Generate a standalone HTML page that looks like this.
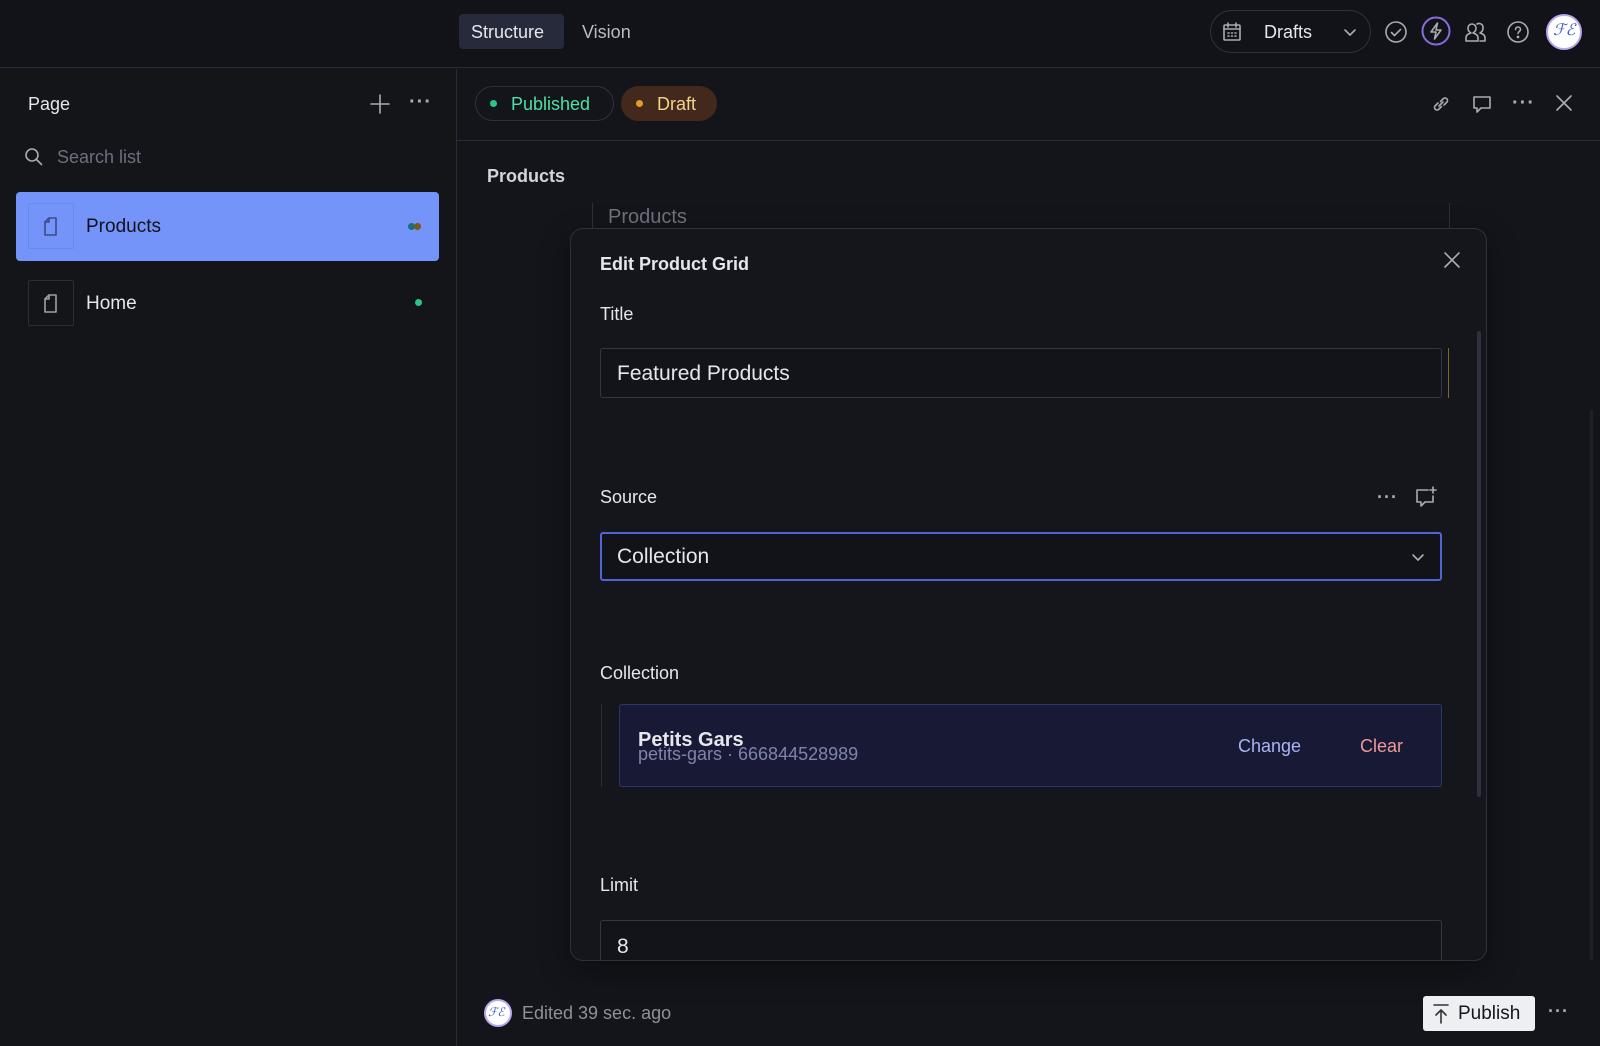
<!DOCTYPE html>
<html><head><meta charset="utf-8"><style>
*{box-sizing:border-box;margin:0;padding:0}
body{width:1600px;height:1046px;background:#14151b;font-family:"Liberation Sans",sans-serif;color:#e4e5ea;position:relative;overflow:hidden}
.a{position:absolute}
.t{position:absolute;white-space:nowrap;line-height:1}
.d{font-size:20px;font-weight:bold;color:#a9abb6;letter-spacing:1px}
svg{position:absolute;fill:none;stroke:#a9abb6;stroke-width:1.6;stroke-linecap:round;stroke-linejoin:round}
</style></head><body>
<div class="a" style="left:0;top:0;width:1600px;height:68px;background:#121318;border-bottom:1px solid #2a2b37"></div>
<div class="a" style="left:459px;top:14px;width:105px;height:35px;background:#262a3a;border-radius:4px"></div>
<div class="t" style="left:471px;top:23px;font-size:18px;color:#e6e7ee">Structure</div>
<div class="t" style="left:582px;top:23px;font-size:18px;color:#b9bbc6">Vision</div>
<div class="a" style="left:1210px;top:10px;width:161px;height:43px;border:1px solid #2e3040;border-radius:22px"></div>
<svg style="left:1221px;top:21px" width="22" height="22" viewBox="0 0 22 22"><rect x="3" y="4" width="16" height="15" rx="1"/><path d="M3 8h16M7 2v4M15 2v4M7 12h1M10.5 12h1M14 12h1M7 15h1M10.5 15h1M14 15h1"/></svg>
<div class="t" style="left:1264px;top:23px;font-size:18px;color:#e6e7ee">Drafts</div>
<svg style="left:1342px;top:24px" width="16" height="16" viewBox="0 0 16 16"><path d="M3 6l5 5 5-5"/></svg>
<svg style="left:1384px;top:20px" width="24" height="24" viewBox="0 0 24 24"><circle cx="12" cy="12" r="10"/><path d="M7.5 12.5l3 3 6-6"/></svg>
<svg style="left:1421px;top:16px;stroke:#8a6bdc;stroke-width:2" width="30" height="30" viewBox="0 0 30 30"><circle cx="15" cy="15" r="13.5"/></svg>
<svg style="left:1426px;top:21px" width="20" height="20" viewBox="0 0 20 20"><path d="M11.5 2L5 11h5l-1.5 7L15 9h-5z"/></svg>
<svg style="left:1463px;top:19px" width="26" height="26" viewBox="0 0 26 26"><path d="M3 22v-3c0-3 2-4 5-5-2-1-3-3-3-5a4 4 0 018 0c0 2-1 4-3 5 3 1 5 2 5 5v3z"/><path d="M14 5a4 4 0 016 4c0 2-1 4-3 5 3 1 5 2 5 5v3h-5"/></svg>
<svg style="left:1506px;top:20px" width="24" height="24" viewBox="0 0 24 24"><circle cx="12" cy="12" r="10"/><path d="M9.5 9.5a2.5 2.5 0 015 0c0 2-2.5 2-2.5 4"/><circle cx="12" cy="17" r=".6" fill="#a9abb6"/></svg>
<div class="a" style="left:1546px;top:14px;width:36px;height:36px;border-radius:50%;background:#fff;border:2px solid #b8a6f2"></div>
<div class="t" style="left:1553px;top:23px;font-size:16px;color:#3b5bd6;font-style:italic">ℱℰ</div>
<div class="a" style="left:0;top:69px;width:457px;height:977px;background:#141519;border-right:1px solid #2a2b37"></div>
<div class="t" style="left:28px;top:95px;font-size:18px;color:#e6e7ee">Page</div>
<svg style="left:369px;top:93px" width="22" height="22" viewBox="0 0 22 22"><path d="M11 2v18M2 11h18"/></svg>
<div class="t d" style="left:409px;top:92px">···</div>
<svg style="left:23px;top:146px" width="22" height="22" viewBox="0 0 22 22"><circle cx="9" cy="9" r="6"/><path d="M13.5 13.5l5 5"/></svg>
<div class="t" style="left:57px;top:148px;font-size:18px;color:#6c6f7e">Search list</div>
<div class="a" style="left:16px;top:192px;width:423px;height:69px;background:#7594fa;border-radius:4px"></div>
<div class="a" style="left:28px;top:203px;width:46px;height:46px;border:1px solid #6a87ea;border-radius:2px"></div>
<svg style="left:40px;top:215px;stroke:#3c4a86" width="22" height="22" viewBox="0 0 22 22"><path d="M5 7l4-4h7v17H5z"/><path d="M9 3v4H5"/></svg>
<div class="t" style="left:86px;top:217px;font-size:19px;color:#121318">Products</div>
<div class="a" style="left:408px;top:223px;width:7px;height:7px;border-radius:50%;background:#1c6f7a"></div>
<div class="a" style="left:414px;top:223px;width:7px;height:7px;border-radius:50%;background:#7a5818"></div>
<div class="a" style="left:28px;top:280px;width:46px;height:46px;border:1px solid #2c2d38;border-radius:2px"></div>
<svg style="left:40px;top:292px;stroke:#9d9fab" width="22" height="22" viewBox="0 0 22 22"><path d="M5 7l4-4h7v17H5z"/><path d="M9 3v4H5"/></svg>
<div class="t" style="left:86px;top:294px;font-size:19px;color:#e6e7ee">Home</div>
<div class="a" style="left:415px;top:299px;width:7px;height:7px;border-radius:50%;background:#2bc48a"></div>
<div class="a" style="left:457px;top:140px;width:1143px;height:1px;background:#2a2b37"></div>
<div class="a" style="left:475px;top:86px;width:139px;height:35px;border:1px solid #2e3040;border-radius:18px"></div>
<div class="a" style="left:490px;top:100px;width:7px;height:7px;border-radius:50%;background:#2bc48a"></div>
<div class="t" style="left:511px;top:95px;font-size:18px;color:#4ee0a4">Published</div>
<div class="a" style="left:621px;top:86px;width:96px;height:35px;background:#43291c;border-radius:18px"></div>
<div class="a" style="left:636px;top:100px;width:7px;height:7px;border-radius:50%;background:#e59b2a"></div>
<div class="t" style="left:657px;top:95px;font-size:18px;color:#f2d48c">Draft</div>
<svg style="left:1430px;top:93px" width="22" height="22" viewBox="0 0 22 22"><path d="M9 13l4-4M8 10l-3 3a2.5 2.5 0 003.5 3.5l3-3M14 12l3-3a2.5 2.5 0 00-3.5-3.5l-3 3"/></svg>
<svg style="left:1471px;top:93px" width="22" height="22" viewBox="0 0 22 22"><path d="M3 4h16v11H10l-4 4v-4H3z"/></svg>
<div class="t d" style="left:1512px;top:93px">···</div>
<svg style="left:1554px;top:93px" width="20" height="20" viewBox="0 0 20 20"><path d="M3 3l14 14M17 3L3 17"/></svg>
<div class="t" style="left:487px;top:167px;font-size:18px;color:#d4d5dc;font-weight:bold">Products</div>
<div class="a" style="left:592px;top:203px;width:1px;height:25px;background:#2e3040"></div>
<div class="a" style="left:1449px;top:203px;width:1px;height:25px;background:#2e3040"></div>
<div class="t" style="left:608px;top:207px;font-size:20px;color:#6f717d">Products</div>
<div class="a" style="left:1590px;top:410px;width:3px;height:550px;background:#1e1f27"></div>
<div class="a" style="left:570px;top:228px;width:917px;height:733px;background:#15161b;border:1px solid #2e3040;border-radius:13px;box-shadow:0 10px 30px rgba(0,0,0,.4);overflow:hidden">
 <div class="t" style="left:29px;top:26px;font-size:18px;color:#e6e7ee;font-weight:bold">Edit Product Grid</div>
 <svg style="left:872px;top:22px" width="18" height="18" viewBox="0 0 18 18"><path d="M2 2l14 14M16 2L2 16"/></svg>
 <div class="t" style="left:29px;top:76px;font-size:18px;color:#e6e7ee">Title</div>
 <div class="a" style="left:29px;top:119px;width:842px;height:50px;border:1px solid #343647;border-radius:3px;background:#131419"></div>
 <div class="t" style="left:46px;top:134px;font-size:21px;color:#e6e7ee">Featured Products</div>
 <div class="a" style="left:877px;top:119px;width:1px;height:50px;background:#8a6424"></div>
 <div class="a" style="left:906px;top:102px;width:4px;height:466px;background:#2e3040;border-radius:2px"></div>
 <div class="t" style="left:29px;top:259px;font-size:18px;color:#e6e7ee">Source</div>
 <div class="t d" style="left:806px;top:259px;font-size:18px">···</div>
 <svg style="left:843px;top:257px" width="24" height="24" viewBox="0 0 24 24"><path d="M14 4H3v12h4v4l4-4h8v-6M19 1v6M16 4h6"/></svg>
 <div class="a" style="left:29px;top:303px;width:842px;height:49px;border:2px solid #5163d8;border-radius:3px;background:#121318"></div>
 <div class="t" style="left:46px;top:317px;font-size:21px;color:#e6e7ee">Collection</div>
 <svg style="left:839px;top:320px" width="16" height="16" viewBox="0 0 16 16"><path d="M3 6l5 5 5-5"/></svg>
 <div class="t" style="left:29px;top:435px;font-size:18px;color:#e6e7ee">Collection</div>
 <div class="a" style="left:30px;top:475px;width:1px;height:83px;background:#2a2b37"></div>
 <div class="a" style="left:48px;top:475px;width:823px;height:83px;background:#181a35;border:1px solid #2c3573;border-radius:3px"></div>
 <div class="t" style="left:67px;top:501px;font-size:20px;color:#e6e7ee;font-weight:bold">Petits Gars</div>
 <div class="t" style="left:67px;top:516px;font-size:18px;color:#7f84ad">petits-gars · 666844528989</div>
 <div class="t" style="left:667px;top:508px;font-size:18px;color:#a8b5f5">Change</div>
 <div class="t" style="left:789px;top:508px;font-size:18px;color:#f0989a">Clear</div>
 <div class="t" style="left:29px;top:647px;font-size:18px;color:#e6e7ee">Limit</div>
 <div class="a" style="left:29px;top:691px;width:842px;height:60px;border:1px solid #343647;border-radius:3px;background:#131419"></div>
 <div class="t" style="left:46px;top:707px;font-size:21px;color:#e6e7ee">8</div>
</div>
<div class="a" style="left:484px;top:999px;width:28px;height:28px;border-radius:50%;background:#fff;border:2px solid #b8a6f2"></div>
<div class="t" style="left:488px;top:1006px;font-size:12px;color:#3b5bd6;font-style:italic">ℱℰ</div>
<div class="t" style="left:522px;top:1004px;font-size:18px;color:#8e909c">Edited 39 sec. ago</div>
<div class="a" style="left:1423px;top:996px;width:112px;height:35px;background:#eeeff2;border-radius:3px"></div>
<svg style="left:1431px;top:1003px;stroke:#333" width="20" height="22" viewBox="0 0 20 22"><path d="M3 2h14M10 20V7M5 12l5-5 5 5"/></svg>
<div class="t" style="left:1458px;top:1004px;font-size:19px;color:#15161b">Publish</div>
<div class="t d" style="left:1548px;top:1002px;font-size:18px">···</div>
</body></html>
